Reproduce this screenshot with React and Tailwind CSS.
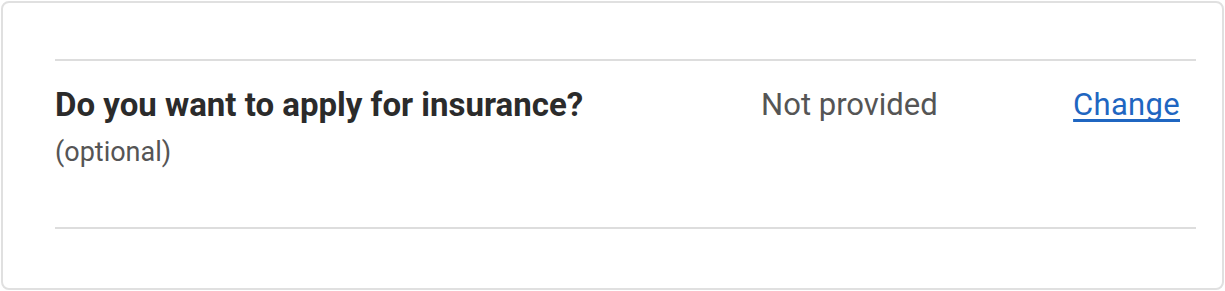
export default function App() {
  return (
    <div className="p-px" style={{ fontFamily: 'Roboto, "Liberation Sans", sans-serif' }}>
      <div className="border-2 border-[#e0e0e0] rounded-[8px] h-[289px] pt-[56px] pl-[52px] pr-[26px]">
        <div className="border-t-2 border-b-2 border-[#dddddd] h-[170px] flex items-start pt-[24px]">
          <div className="flex-1">
            <div className="text-[33px] font-bold text-[#2b2b2b] leading-[40px]">Do you want to apply for insurance?</div>
            <div className="text-[27px] text-[#555555] leading-[36px] mt-[9px]">(optional)</div>
          </div>
          <div className="w-[312px] text-[31px] text-[#555555] leading-[36px] mt-[2px]">Not provided</div>
          <a href="#" className="text-[31px] text-[#1f66c1] underline underline-offset-[4px] [text-decoration-skip-ink:none] leading-[36px] mt-[2px] mr-[16px] tracking-[0.3px]">Change</a>
        </div>
      </div>
    </div>
  );
}
